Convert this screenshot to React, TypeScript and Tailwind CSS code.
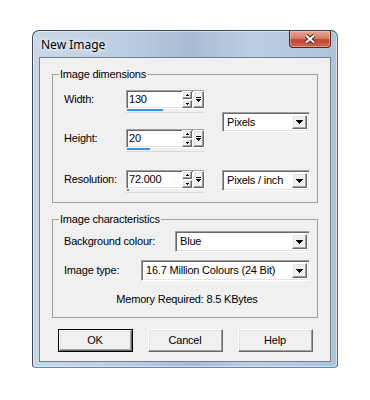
import React from "react"

const sunken =
  "border border-t-[#a0a0a0] border-l-[#a0a0a0] border-b-white border-r-white shadow-[inset_1px_1px_0_#696969,inset_-1px_-1px_0_#e3e3e3]"
const raised =
  "border border-t-white border-l-white border-b-[#696969] border-r-[#696969] bg-[#f0f0f0] shadow-[inset_-1px_-1px_0_#a0a0a0,inset_1px_1px_0_#e3e3e3]"

const DownArrow = () => (
  <svg width="7" height="4" viewBox="0 0 7 4" shapeRendering="crispEdges">
    <rect x="0" y="0" width="7" height="1" />
    <rect x="1" y="1" width="5" height="1" />
    <rect x="2" y="2" width="3" height="1" />
    <rect x="3" y="3" width="1" height="1" />
  </svg>
)

const SpinButton = ({ up }: { up?: boolean }) => (
  <div className={`flex h-[8px] items-center justify-center ${raised}`}>
    <svg width="3" height="2" viewBox="0 0 3 2" shapeRendering="crispEdges">
      <rect x="1" y={up ? 0 : 1} width="1" height="1" />
      <rect x="0" y={up ? 1 : 0} width="3" height="1" />
    </svg>
  </div>
)

interface SpinFieldProps {
  value: string
  bar: number
}

const SpinField: React.FC<SpinFieldProps> = ({ value, bar }) => (
  <div className="w-[79px]">
    <div className={`flex h-[19px] bg-white ${sunken}`}>
      <span className="flex-1 pl-[2px] leading-[17px]">{value}</span>
      <div className="flex h-[17px] w-[10px] flex-col justify-between">
        <SpinButton up />
        <SpinButton />
      </div>
      <div className={`ml-[1px] flex h-[17px] w-[11px] items-center justify-center ${raised}`}>
        <svg width="5" height="6" viewBox="0 0 5 6" shapeRendering="crispEdges">
          <rect x="0" y="0" width="5" height="1" />
          <rect x="0" y="2" width="5" height="1" />
          <rect x="1" y="3" width="3" height="1" />
          <rect x="2" y="4" width="1" height="1" />
        </svg>
      </div>
    </div>
    <div className="h-[3px] pl-[1px]">
      <div className="h-[2px] bg-[#3d8fe6]" style={{ width: bar }} />
    </div>
    <div className="h-[1px] bg-[#dcdcdc]" />
  </div>
)

interface DropdownProps {
  value: string
  className?: string
}

const Dropdown: React.FC<DropdownProps> = ({ value, className }) => (
  <div className={`flex bg-white p-[2px] ${sunken} ${className ?? ""}`}>
    <span className="flex-1 truncate pl-[2px] leading-[15px]">{value}</span>
    <div className={`flex w-[15px] items-center justify-center ${raised}`}>
      <DownArrow />
    </div>
  </div>
)

const Button = ({ label, isDefault }: { label: string; isDefault?: boolean }) => (
  <div
    className={`flex h-[23px] w-[75px] items-center justify-center ${
      isDefault ? "border border-black" : ""
    }`}
  >
    <div className={`flex h-full w-full items-center justify-center ${raised}`}>{label}</div>
  </div>
)

const GroupLabel = ({ children }: { children: React.ReactNode }) => (
  <div className="-mt-[7px] -ml-[5px] w-fit bg-[#f0f0f0] px-[1px] leading-[13px]">{children}</div>
)

export default function App() {
  return (
    <div className="h-[400px] w-[370px] bg-white pt-[30px] pl-[32px] font-['Liberation_Sans',Arial,sans-serif] text-[11px] tracking-[-0.2px] text-black">
      <div className="w-[306px] rounded-t-[7px] rounded-b-[4px] border border-[#3b4756] border-r-[#3a6f92] border-b-[#2b9fd0] bg-[linear-gradient(90deg,#c8d7e7_0%,#bccee1_30%,#a7bcd3_52%,#bdcee1_72%,#afc3d9_100%)] px-[6px] pb-[5px] shadow-[inset_0_0_0_1px_rgba(255,255,255,0.45)]">
        {/* title bar */}
        <div className="flex h-[26px] items-start justify-between">
          <span className="pt-[6px] pl-[2px] font-['Noto_Sans',sans-serif] text-[12px] leading-[16px] tracking-normal [text-shadow:0_0_4px_#fff,0_0_8px_#fff]">
            New Image
          </span>
          <div className="flex h-[17px] w-[42px] items-center justify-center rounded-b-[4px] border border-t-0 border-[#5e241a] bg-[linear-gradient(180deg,#e8a696_0%,#d5806b_45%,#c04530_55%,#c96a4e_100%)] shadow-[inset_0_0_0_1px_rgba(255,210,200,0.45)]">
            <svg width="12" height="10" viewBox="0 0 12 10">
              <path d="M2 1.5l8 7M10 1.5l-8 7" stroke="#4a1e16" strokeWidth="4" />
              <path d="M2 1.5l8 7M10 1.5l-8 7" stroke="#fff" strokeWidth="2" />
            </svg>
          </div>
        </div>

        {/* client area */}
        <div className="border border-[#6f8196] bg-[#f0f0f0] px-[12px] pt-[16px] pb-[9px]">
          <div className="h-[129px] border border-[#a0a0a0] pl-[11px]">
            <GroupLabel>Image dimensions</GroupLabel>
            <div className="flex">
              <div className="flex flex-col">
                <div className="mt-[9px] flex">
                  <span className="w-[62px] leading-[19px]">Width:</span>
                  <SpinField value="130" bar={36} />
                </div>
                <div className="mt-[16px] flex">
                  <span className="w-[62px] leading-[19px]">Height:</span>
                  <SpinField value="20" bar={23} />
                </div>
                <div className="mt-[18px] flex">
                  <span className="w-[62px] leading-[19px]">Resolution:</span>
                  <SpinField value="72.000" bar={2} />
                </div>
              </div>
              <div className="ml-[17px] flex flex-col">
                <Dropdown value="Pixels" className="mt-[31px] h-[20px] w-[88px]" />
                <Dropdown value="Pixels / inch" className="mt-[38px] h-[21px] w-[88px]" />
              </div>
            </div>
          </div>

          <div className="mt-[16px] h-[99px] border border-[#a0a0a0] pr-[7px] pl-[11px]">
            <GroupLabel>Image characteristics</GroupLabel>
            <div className="mt-[5px] flex items-center">
              <span className="w-[111px]">Background colour:</span>
              <Dropdown value="Blue" className="h-[21px] flex-1" />
            </div>
            <div className="mt-[8px] flex items-center">
              <span className="w-[77px]">Image type:</span>
              <Dropdown value="16.7 Million Colours (24 Bit)" className="h-[21px] flex-1" />
            </div>
            <div className="mt-[12px] text-center leading-[13px]">Memory Required: 8.5 KBytes</div>
          </div>

          <div className="mt-[11px] flex justify-center gap-[15px]">
            <Button label="OK" isDefault />
            <Button label="Cancel" />
            <Button label="Help" />
          </div>
        </div>
      </div>
    </div>
  )
}
